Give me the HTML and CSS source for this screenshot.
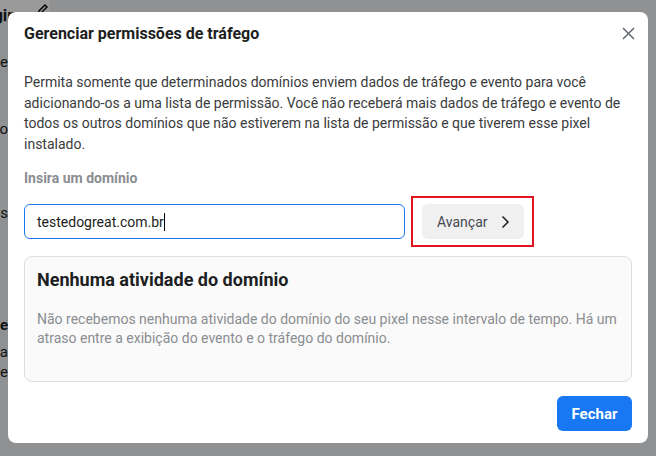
FILE: index.html
```html
<!DOCTYPE html>
<html lang="pt-BR">
<head>
    <meta charset="UTF-8">
    <title>Gerenciar permissões de tráfego</title>
    <link rel="stylesheet" href="styles.css">
</head>
<body>
    <div class="page">
        <div class="page-top">
            <span class="page-title">Configurações de página</span>
            <svg class="page-pencil" width="14" height="14" viewBox="0 0 14 14"><path d="M2 12 L3 9 L9 3 L11 5 L5 11 Z" fill="none" stroke="#000" stroke-width="1.4"/></svg>
        </div>
        <div class="page-body">
            <p class="page-line l1">Detalhe</p>
            <p class="page-line l2">Evento</p>
            <p class="page-line l3">Códigos</p>
            <p class="page-line l4 strong">Site</p>
            <p class="page-line l5">Tela</p>
            <p class="page-line l6">Rede</p>
        </div>
    </div>

    <div class="overlay">
        <div class="modal">
            <div class="modal-header">
                <h1>Gerenciar permissões de tráfego</h1>
                <button class="close" aria-label="Fechar">
                    <svg width="13" height="13" viewBox="0 0 13 13"><path d="M1 1 L12 12 M12 1 L1 12" stroke="#606770" stroke-width="1.5" fill="none"/></svg>
                </button>
            </div>

            <div class="modal-body">
                <p class="intro">Permita somente que determinados domínios enviem dados de tráfego e evento para você adicionando-os a uma lista de permissão. Você não receberá mais dados de tráfego e evento de todos os outros domínios que não estiverem na lista de permissão e que tiverem esse pixel instalado.</p>

                <label class="field-label">Insira um domínio</label>
                <div class="field-row">
                    <div class="domain-input"><span>testedogreat.com.br</span><i class="caret"></i></div>
                    <div class="highlight">
                        <button class="next">Avançar
                            <svg width="9" height="14" viewBox="0 0 9 14"><path d="M1.5 1.5 L7 7 L1.5 12.5" stroke="#1c1e21" stroke-width="1.5" fill="none"/></svg>
                        </button>
                    </div>
                </div>

                <div class="empty-card">
                    <h2>Nenhuma atividade do domínio</h2>
                    <p>Não recebemos nenhuma atividade do domínio do seu pixel nesse intervalo de tempo. Há um atraso entre a exibição do evento e o tráfego do domínio.</p>
                </div>
            </div>

            <div class="modal-footer">
                <button class="primary">Fechar</button>
            </div>
        </div>
    </div>
</body>
</html>
```

FILE: styles.css
```css
* {
    margin: 0;
    padding: 0;
    box-sizing: border-box;
}

body {
    font-family: Roboto, "Liberation Sans", Arial, sans-serif;
    background-color: #f0f2f5;
    color: #1c1e21;
    width: 656px;
    height: 456px;
    overflow: hidden;
}

/* page behind the dialog */
.page-top {
    height: 22px;
    background-color: #fff;
    border-bottom: 1px solid #ddd;
    display: flex;
    align-items: flex-start;
    width: 50px;
    justify-content: flex-end;
    gap: 20px;
}

.page-title {
    font-size: 17px;
    font-weight: 700;
    white-space: nowrap;
    padding-top: 5px;
    margin-right: -10px;
}

.page-pencil {
    flex-shrink: 0;
    margin-top: 2px;
}

.page-body {
    width: 8px;
}

.page-line {
    display: flex;
    justify-content: flex-end;
    white-space: nowrap;
    font-size: 15px;
    line-height: 18px;
    color: #1c1e21;
}

.page-line.l1 { margin-top: 31px; }
.page-line.l2 { margin-top: 49px; }
.page-line.l3 { margin-top: 66px; }
.page-line.l4 { margin-top: 94px; }
.page-line.l5 { margin-top: 9px; }
.page-line.l6 { margin-top: 2px; }
.strong { font-weight: 700; }

/* dialog */
.overlay {
    position: absolute;
    inset: 0;
    background-color: rgba(0, 0, 0, 0.4);
    padding: 12px 8px 0 8px;
}

.modal {
    width: 640px;
    height: 431px;
    background-color: #fff;
    border-radius: 8px;
    display: flex;
    flex-direction: column;
}

.modal-header {
    display: flex;
    justify-content: space-between;
    align-items: center;
    padding: 0 11px 0 16px;
    height: 42px;
}

.modal-header h1 {
    font-size: 16px;
    font-weight: 700;
    color: #1c1e21;
}

.close {
    background: none;
    border: none;
    width: 18px;
    height: 18px;
    display: flex;
    align-items: center;
    justify-content: center;
}

.modal-body {
    padding: 18px 16px 0 16px;
    flex: 1;
}

.intro {
    font-size: 14px;
    line-height: 20.5px;
    color: #3a3b3c;
}

.field-label {
    display: block;
    margin-top: 16px;
    font-size: 14px;
    font-weight: 700;
    color: #8a8d91;
}

.field-row {
    display: flex;
    align-items: center;
    margin-top: 10px;
}

.domain-input {
    width: 381px;
    height: 35px;
    border: 1px solid #1877f2;
    border-radius: 6px;
    padding: 0 12px;
    display: flex;
    align-items: center;
    font-size: 14px;
    color: #1c1e21;
}

.caret {
    display: inline-block;
    width: 1px;
    height: 18px;
    background-color: #000;
}

.highlight {
    margin-left: 6px;
    border: 2.5px solid #e0141e;
    padding: 6px 8px 6px 9px;
}

.next {
    display: flex;
    align-items: center;
    gap: 13px;
    height: 35px;
    width: 102px;
    padding: 0 0 0 15px;
    border: none;
    border-radius: 6px;
    background-color: #f0f0f0;
    font-family: inherit;
    font-size: 14px;
    color: #444950;
}

.next svg {
    flex-shrink: 0;
}

.empty-card {
    margin-top: 9px;
    height: 126px;
    border: 1px solid #dadde1;
    border-radius: 8px;
    background-color: #fafafa;
    padding: 12px 12px 0 12px;
}

.empty-card h2 {
    font-size: 18px;
    font-weight: 700;
    color: #1c1e21;
}

.empty-card p {
    margin-top: 20px;
    font-size: 14px;
    line-height: 19px;
    color: #8a8d91;
}

.modal-footer {
    display: flex;
    justify-content: flex-end;
    padding: 0 16px 12px 16px;
}

.primary {
    width: 75px;
    height: 35px;
    border: none;
    border-radius: 6px;
    background-color: #1877f2;
    color: #fff;
    font-family: inherit;
    font-size: 15px;
    font-weight: 700;
}
```
